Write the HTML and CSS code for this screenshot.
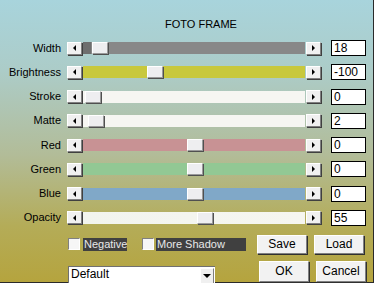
FILE: index.html
```html
<!DOCTYPE html>
<html>
<head>
<meta charset="utf-8">
<link rel="stylesheet" href="styles.css">
</head>
<body>
<div class="dialog">
  <div class="title">FOTO FRAME</div>
  <div class="rows">
    <div class="row">
      <span class="label">Width</span>
      <span class="arrow left"></span>
      <span class="track t-width"><span class="pressed" style="width:8px"></span><span class="thumb" style="left:9px"></span></span>
      <span class="arrow right"></span>
      <span class="num">18</span>
    </div>
    <div class="row">
      <span class="label">Brightness</span>
      <span class="arrow left"></span>
      <span class="track t-bright"><span class="thumb" style="left:64px"></span></span>
      <span class="arrow right"></span>
      <span class="num">-100</span>
    </div>
    <div class="row">
      <span class="label">Stroke</span>
      <span class="arrow left"></span>
      <span class="track t-white"><span class="thumb" style="left:2px"></span></span>
      <span class="arrow right"></span>
      <span class="num">0</span>
    </div>
    <div class="row">
      <span class="label">Matte</span>
      <span class="arrow left"></span>
      <span class="track t-white"><span class="thumb" style="left:5px"></span></span>
      <span class="arrow right"></span>
      <span class="num">2</span>
    </div>
    <div class="row">
      <span class="label">Red</span>
      <span class="arrow left"></span>
      <span class="track t-red"><span class="thumb" style="left:104px"></span></span>
      <span class="arrow right"></span>
      <span class="num">0</span>
    </div>
    <div class="row">
      <span class="label">Green</span>
      <span class="arrow left"></span>
      <span class="track t-green"><span class="thumb" style="left:104px"></span></span>
      <span class="arrow right"></span>
      <span class="num">0</span>
    </div>
    <div class="row">
      <span class="label">Blue</span>
      <span class="arrow left"></span>
      <span class="track t-blue"><span class="thumb" style="left:104px"></span></span>
      <span class="arrow right"></span>
      <span class="num">0</span>
    </div>
    <div class="row">
      <span class="label">Opacity</span>
      <span class="arrow left"></span>
      <span class="track t-opacity"><span class="thumb" style="left:114px"></span></span>
      <span class="arrow right"></span>
      <span class="num">55</span>
    </div>
  </div>
  <div class="bottom">
    <div class="brow brow1">
      <span class="check"></span>
      <span class="clabel">Negative</span>
      <span class="check c2"></span>
      <span class="clabel wide">More Shadow</span>
      <span class="btn save">Save</span>
      <span class="btn load">Load</span>
    </div>
    <div class="brow brow2">
      <span class="select"><span class="sel-text">Default</span><span class="sel-btn"></span></span>
      <span class="btn ok">OK</span>
      <span class="btn cancel">Cancel</span>
    </div>
  </div>
</div>
</body>
</html>
```

FILE: styles.css
```css
html, body {
  margin: 0;
  padding: 0;
}
body {
  width: 374px;
  height: 283px;
  overflow: hidden;
  font-family: "Liberation Sans", Arial, sans-serif;
  font-size: 11px;
  color: #000;
}
.dialog {
  box-sizing: border-box;
  width: 374px;
  height: 283px;
  border-right: 1px solid #2a2a2a;
  border-bottom: 1px solid #2a2a2a;
  background: linear-gradient(to bottom, #a8d4dc 0%, #acccc8 25%, #b2bc98 55%, #b4ac58 80%, #b5a43e 100%);
}
.title {
  height: 35.86px;
  box-sizing: border-box;
  padding-left: 165px;
  padding-top: 17px;
  line-height: 14px;
  font-size: 11px;
}
.rows {
  display: flex;
  flex-direction: column;
}
.row {
  height: 24.29px;
  display: flex;
  align-items: center;
}
.label {
  width: 61px;
  text-align: right;
  margin-right: 6px;
  line-height: 13px;
}
.arrow {
  box-sizing: border-box;
  width: 15px;
  height: 13px;
  background: #f0f0f0;
  border-top: 1px solid #fff;
  border-left: 1px solid #fff;
  border-right: 1px solid #808080;
  border-bottom: 1px solid #808080;
  box-shadow: 1px 1px 0 #404040;
  display: flex;
  align-items: center;
  justify-content: center;
  position: relative;
}
.arrow::after {
  content: "";
  width: 0;
  height: 0;
  border-top: 3px solid transparent;
  border-bottom: 3px solid transparent;
}
.arrow.left::after {
  border-right: 3px solid #000;
}
.arrow.right::after {
  border-left: 3px solid #000;
}
.track {
  position: relative;
  width: 222px;
  height: 12px;
  margin: 0 1px;
}
.t-width { background: #888888; }
.t-width .pressed {
  position: absolute;
  left: 0;
  top: 0;
  height: 12px;
  background: #6e6e6e;
}
.t-bright { background: #c8c83c; }
.t-white { background: #f6f6f2; }
.t-red { background: #c89294; }
.t-green { background: #92c894; }
.t-blue { background: #80a8c8; }
.t-opacity { background: linear-gradient(to right, #f2f4ee, #f6f6f0); }
.thumb {
  position: absolute;
  top: 0;
  box-sizing: border-box;
  width: 16px;
  height: 12px;
  background: #eeeef0;
  border-top: 1px solid #fff;
  border-left: 1px solid #fff;
  border-right: 1px solid #9a9a9a;
  border-bottom: 1px solid #9a9a9a;
  box-shadow: 1px 1px 0 #505050;
}
.num {
  box-sizing: border-box;
  width: 35px;
  height: 16px;
  margin-left: 10px;
  background: #fff;
  border: 1px solid #000;
  font-size: 12px;
  line-height: 14px;
  padding-left: 2px;
}
.bottom {
  padding-top: 4.7px;
}
.brow {
  display: flex;
  align-items: center;
}
.brow1 {
  height: 19px;
}
.check {
  box-sizing: border-box;
  width: 12px;
  height: 12px;
  margin-left: 68px;
  background: #f6f6f6;
  border-top: 1px solid #808080;
  border-left: 1px solid #808080;
  border-right: 1px solid #fff;
  border-bottom: 1px solid #fff;
}
.check.c2 {
  margin-left: 15px;
}
.clabel {
  margin-left: 3px;
  background: #404040;
  color: #e8e8e8;
  height: 13px;
  line-height: 13px;
  padding: 0 1px;
  width: 42px;
}
.clabel.wide {
  width: 88px;
  margin-left: 2px;
}
.btn {
  box-sizing: border-box;
  width: 50px;
  height: 19px;
  background: #f2f2f2;
  border-top: 1px solid #fff;
  border-left: 1px solid #fff;
  border-right: 1px solid #808080;
  border-bottom: 1px solid #808080;
  box-shadow: 1px 1px 0 #303030;
  font-size: 12px;
  line-height: 17px;
  text-align: center;
}
.save { margin-left: 11px; }
.load { margin-left: 7px; }
.brow2 {
  margin-top: 7px;
  height: 21px;
  align-items: flex-start;
}
.brow2 .btn {
  height: 21px;
  line-height: 19px;
}
.select {
  box-sizing: border-box;
  margin-left: 68px;
  margin-top: 5px;
  width: 147px;
  height: 18px;
  background: #fff;
  border-top: 1px solid #707070;
  border-left: 1px solid #707070;
  display: flex;
  align-items: flex-start;
}
.sel-text {
  flex: 1;
  font-size: 12px;
  line-height: 15px;
  padding-left: 2px;
}
.sel-btn {
  box-sizing: border-box;
  width: 14px;
  height: 16px;
  margin-top: 1px;
  margin-right: 1px;
  background: #f0f0f0;
  border-top: 1px solid #fff;
  border-left: 1px solid #fff;
  border-right: 1px solid #808080;
  border-bottom: 1px solid #808080;
  display: flex;
  align-items: center;
  justify-content: center;
}
.sel-btn::after {
  content: "";
  border-left: 4px solid transparent;
  border-right: 4px solid transparent;
  border-top: 4px solid #000;
}
.ok { margin-left: 44px; }
.cancel { margin-left: 7px; }
```
